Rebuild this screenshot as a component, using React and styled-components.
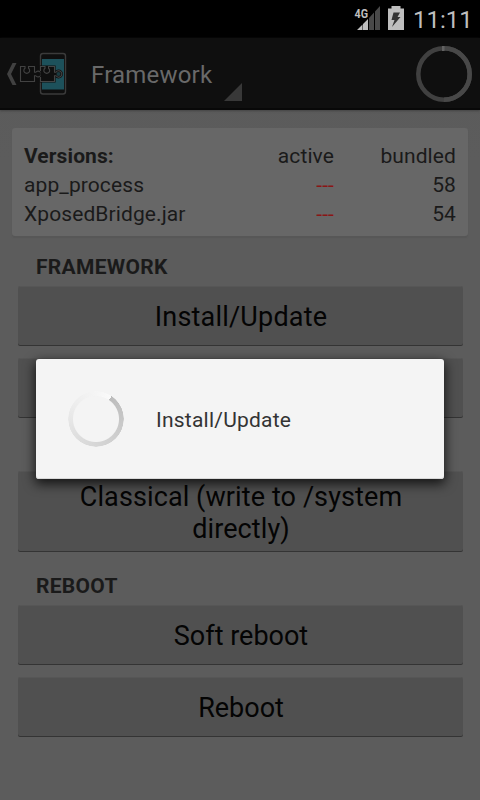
import React from "react";
import styled, { createGlobalStyle } from "styled-components";

const Global = createGlobalStyle`
  * { box-sizing: border-box; }
  html, body { margin: 0; background: #5c5c5c; }
  body { font-family: Roboto, "Liberation Sans", sans-serif; font-size: 21px; color: #1a1a1a; }
`;

const Screen = styled.div`
  position: relative;
  width: 480px;
  height: 800px;
  overflow: hidden;
  display: flex;
  flex-direction: column;
  background: linear-gradient(#5a5a5a, #5c5c5c 20%, #5c5c5c);
`;

const StatusBar = styled.header`
  height: 38px;
  flex: none;
  display: flex;
  justify-content: flex-end;
  background: #000;
`;

const Clock = styled.time`
  width: 76px;
  padding-left: 9px;
  line-height: 40px;
  font-size: 24px;
  color: #bebebe;
  white-space: nowrap;
`;

const ActionBar = styled.nav`
  height: 72px;
  flex: none;
  display: flex;
  background: #0f0f0f;
  border-bottom: 2px solid #080808;
  box-shadow: 0 1px 2px #444;
`;

const Title = styled.h1`
  margin: 0;
  width: 133px;
  line-height: 75px;
  font-size: 24px;
  font-weight: 400;
  letter-spacing: 0.2px;
  color: #696969;
`;

const SpinnerMark = styled.svg`
  margin-top: 45px;
`;

const BarProgress = styled.svg`
  margin: 7px 7px 0 auto;
`;

const Content = styled.main`
  flex: 1;
  padding: 18px 12px;
`;

const Card = styled.section`
  height: 108px;
  padding: 14px 12px 0;
  border-radius: 3px;
  background: #676767;
  box-shadow: 0 2px 1px #575757;
  display: grid;
  grid-template-columns: 200px 110px 122px;
  grid-auto-rows: 29px;
  line-height: 29px;
`;

const Cell = styled.span`
  text-align: ${(p) => (p.$end ? "right" : "left")};
  font-weight: ${(p) => (p.$bold ? 700 : 400)};
  color: ${(p) => (p.$missing ? "#8a1616" : "inherit")};
  letter-spacing: 0.1px;
`;

const SectionTitle = styled.h2`
  margin: ${(p) => p.$top}px 0 0 24px;
  height: 30px;
  line-height: 30px;
  font-size: 21px;
  font-weight: 700;
  letter-spacing: 0.3px;
`;

const ActionButton = styled.button`
  display: block;
  width: 445px;
  height: ${(p) => (p.$tall ? 80 : 59)}px;
  margin: ${(p) => p.$top}px 0 0 6px;
  padding: ${(p) => (p.$tall ? 3 : 2)}px 49px 0 50px;
  border: 0;
  border-radius: 2px;
  background: #505050;
  box-shadow: inset 0 1px #565656, 0 1px #343434;
  font: 27px/32px Roboto, "Liberation Sans", sans-serif;
  letter-spacing: ${(p) => p.$track || 0}px;
  color: #040404;
`;

const Dialog = styled.div`
  position: absolute;
  left: 36px;
  top: 359px;
  width: 408px;
  height: 120px;
  padding-left: 32px;
  display: flex;
  align-items: center;
  gap: 32px;
  border-radius: 3px;
  background: #f4f4f4;
  box-shadow: inset 0 -1px #d8d8d8, 0 4px 12px 1px rgba(0, 0, 0, 0.75);
  color: #333;
`;

const Message = styled.span`
  padding-top: 2px;
  letter-spacing: 0.23px;
`;

const Ring = styled.div`
  width: 56px;
  height: 56px;
  border-radius: 50%;
  background: conic-gradient(from 34deg, #bcbcbc, #d0d0d0 30%, #dcdcdc 50%, #ededed 75%, #fafafa);
  mask: radial-gradient(circle, transparent 22.5px, #000 23.5px, #000 27.5px, transparent 28px);
`;

const SignalIcon = () => (
  <svg width="36" height="38" viewBox="352 0 36 38">
    <text x="354.5" y="17.5" fontSize="13" fontWeight="700" fill="#bebebe" textLength="13.5" lengthAdjust="spacingAndGlyphs">4G</text>
    <path d="M357 30L362.5 24.5V30ZM363 24L368 19V30H363Z" fill="#bebebe" />
    <path d="M369 18L374 12.5V30H369ZM375 11.5L380 6V30H375Z" fill="#494949" />
  </svg>
);

const BatteryIcon = () => (
  <svg width="16" height="38" viewBox="388 0 16 38">
    <path d="M388 8.500H391.500V6H400.500V8.500H404V30H388Z" fill="#bebebe" />
    <path d="M393.500 12.500H400L397.500 17H400.500L392 27L394.500 20H391.500Z" fill="#333" />
  </svg>
);

const Logo = () => (
  <svg width="91" height="70" viewBox="0 38 91 70">
    <path d="M12.500 63H16.500L11 74L16.500 85H12.500L7 74Z" fill="#414141" />
    <rect x="40.500" y="53.500" width="25" height="40.500" rx="2.500" fill="#0f0f0f" stroke="#3b3b3b" strokeWidth="1.400" />
    <path d="M42 59H64V89.500H42Z" fill="#1d515b" />
    <path d="M40.500 66.500H54.500V72H56A3.300 3.300 0 1 1 56 76H54.500V81.500H40.500Z" fill="#0f0f0f" stroke="#0f0f0f" strokeWidth="2.200" />
    <path d="M20.500 66.500H25V68.200A2.900 2.900 0 1 0 28.500 68.200V66.500H34.500V72.300H35.800A2.900 2.900 0 1 1 35.800 75.700H34.500V81.500H20.500Z" fill="#0f0f0f" stroke="#424242" strokeWidth="1.100" />
    <path d="M40.500 71V66.500H45V68.200A2.900 2.900 0 1 0 48.500 68.200V66.500H54.500V72.200H56A3.200 3.200 0 1 1 56 75.800H54.500V81.500H40.500V77" fill="#0f0f0f" stroke="#444" strokeWidth="1.100" />
    <circle cx="58.500" cy="74" r="2" fill="#1b3b41" />
  </svg>
);

export default function App() {
  return (
    <>
      <Global />
      <Screen>
        <StatusBar>
          <SignalIcon />
          <BatteryIcon />
          <Clock>11:11</Clock>
        </StatusBar>
        <ActionBar>
          <Logo />
          <Title>Framework</Title>
          <SpinnerMark width="18" height="18">
            <path d="M0 18L18 0V18Z" fill="#383838" />
          </SpinnerMark>
          <BarProgress width="58" height="58">
            <circle cx="29" cy="29" r="25.700" fill="none" stroke="#404040" strokeWidth="4.500" />
            <path d="M29 3.300A25.700 25.700 0 0 1 29 54.700" fill="none" stroke="#484848" strokeWidth="4.500" />
            <path d="M27 1H29.500V6H27Z" fill="#626262" />
          </BarProgress>
        </ActionBar>
        <Content>
          <Card>
            <Cell $bold>Versions:</Cell>
            <Cell $end>active</Cell>
            <Cell $end>bundled</Cell>
            <Cell>app_process</Cell>
            <Cell $end $missing>---</Cell>
            <Cell $end>58</Cell>
            <Cell>XposedBridge.jar</Cell>
            <Cell $end $missing>---</Cell>
            <Cell $end>54</Cell>
          </Card>
          <SectionTitle $top={16}>FRAMEWORK</SectionTitle>
          <ActionButton $top={4} $track={0.2}>Install/Update</ActionButton>
          <ActionButton $top={13} aria-label="Uninstall" />
          <ActionButton $top={54} $tall $track={0.1}>Classical (write to /system directly)</ActionButton>
          <SectionTitle $top={20}>REBOOT</SectionTitle>
          <ActionButton $top={4}>Soft reboot</ActionButton>
          <ActionButton $top={13}>Reboot</ActionButton>
        </Content>
        <Dialog role="dialog">
          <Ring />
          <Message>Install/Update</Message>
        </Dialog>
      </Screen>
    </>
  );
}
